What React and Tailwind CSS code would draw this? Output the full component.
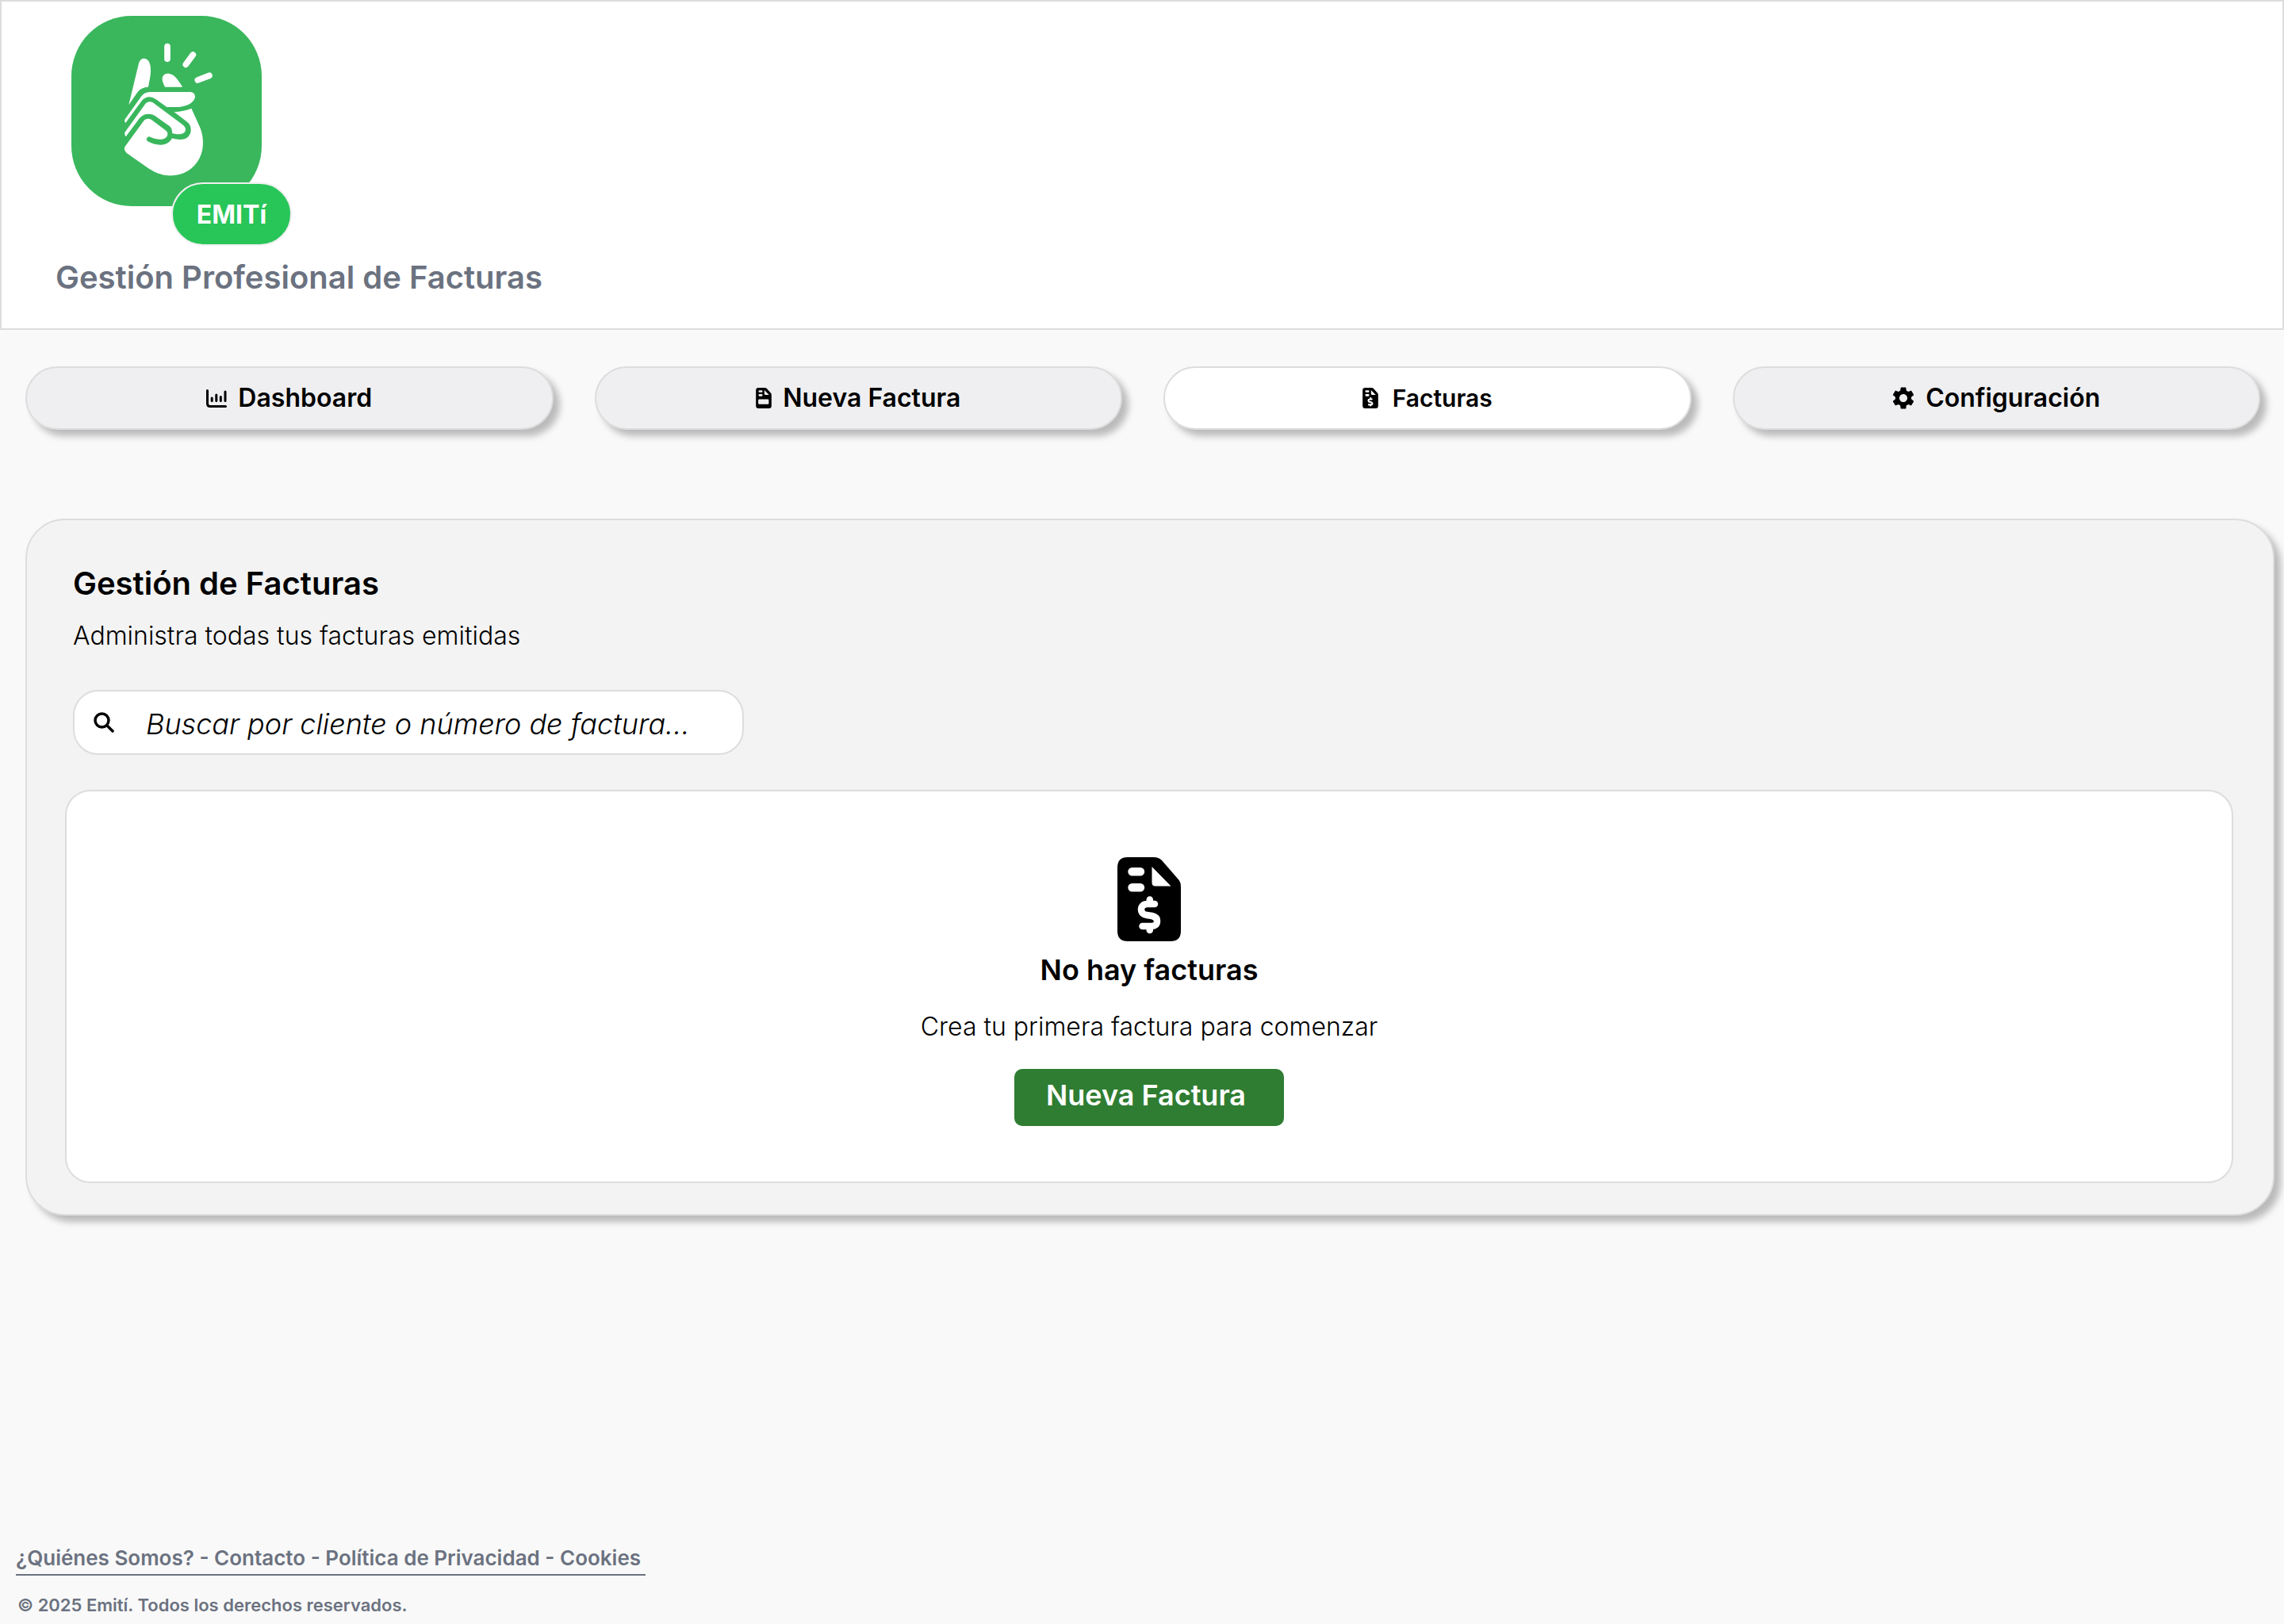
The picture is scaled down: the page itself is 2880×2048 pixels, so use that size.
import { MdSettings } from "react-icons/md";

function SnapLogo() {
  return (
    <svg viewBox="-150 -30 720 720" className="size-60" role="img" aria-label="Emití">
      <rect x="-150" y="-30" width="720" height="720" rx="228" fill="#3ab75d" />
      <g stroke="#fff" strokeWidth="23" strokeLinecap="round">
        <path d="M213 86V133" />
        <path d="M310 117L283 154" />
        <path d="M372 196L328 213" />
      </g>
      <g fill="#fff">
        <path d="M67 307L105 149C109 136 116 131 126 131C143 133 151 150 150 182C149 202 144 220 141 239C122 240 110 247 101 258Z" />
        <path d="M204 239C198 224 193 216 194 206C196 191 209 187 222 189C244 194 258 219 270 239Z" />
        <path d="M52 362L113 277Q126 258 147 258H300C313 259 318 267 318 278C312 302 280 315 245 315H211L170 286C150 272 132 274 117 290L55 375Q49 370 52 362Z" />
        <path d="M52 411L126 308C138 292 150 292 164 302L270 381C280 389 285 398 281 406C276 419 255 421 231 414C232 402 229 395 222 388L166 348C147 337 124 339 108 357L56 427Q50 421 52 411Z" />
        <path d="M53 464L123 368C131 358 144 357 154 364L205 402C213 408 216 415 213 422C208 439 180 442 150 429A9 9 0 0 0 139 445C165 460 200 464 219 448Q227 441 231 433C255 440 278 440 291 428C306 413 306 388 290 373L239 334Q276 331 304 320L337 393C352 430 352 475 334 510C310 556 262 580 206 573C180 569 160 559 136 543L59 489Q46 478 53 464Z" />
      </g>
    </svg>
  );
}

function ChartIcon() {
  return (
    <svg viewBox="0 0 26 23" className="h-[23px] w-[26px] shrink-0" fill="none" stroke="currentColor" strokeWidth="3" strokeLinecap="round" aria-hidden="true">
      <path d="M1.5 1.5V18Q1.5 21.500 5 21.500H24.500M7.200 11V14.500M12.800 7V14.500M18.300 9.500V14.500M24 3V14.500" />
    </svg>
  );
}

function SheetBody() {
  return (
    <path
      fill="currentColor"
      fillRule="evenodd"
      d="M13 0H46Q52 0 56 4L76 27Q80 31 80 37V93Q80 106 67 106H13Q0 106 0 93V13Q0 0 13 0ZM18.500 13a5.200 5.200 0 0 0 0 10.400H29a5.200 5.200 0 0 0 0-10.400ZM18.500 33a5.200 5.200 0 0 0 0 10.400H29a5.200 5.200 0 0 0 0-10.400ZM43.500 12V32Q43.500 36.500 48 36.500H67.500Z"
    />
  );
}

function InvoiceMoneyIcon({ className }) {
  return (
    <svg viewBox="0 0 80 106" className={className} aria-hidden="true">
      <SheetBody />
      <path
        className="stroke-white"
        fill="none"
        strokeWidth="8.500"
        strokeLinecap="round"
        strokeLinejoin="round"
        d="M47 59H38C32.500 59 30 62 30 66C30 70 33 72.500 37 73L43.500 74C48 75 50 77 50 80.500C50 85 47.500 87 43 87H31.500M40.800 53.500V58M40.800 88V92"
      />
    </svg>
  );
}

function InvoiceIcon() {
  return (
    <svg viewBox="0 0 80 106" className="h-[26px] w-5 shrink-0" aria-hidden="true">
      <SheetBody />
      <rect x="12" y="59" width="54" height="26" rx="5" className="fill-[#efeff1]" />
    </svg>
  );
}

function SearchIcon() {
  return (
    <svg viewBox="0 0 26 26" className="size-[26px] shrink-0" fill="none" stroke="currentColor" strokeWidth="3.500" strokeLinecap="round" aria-hidden="true">
      <circle cx="10.500" cy="10.500" r="8.500" />
      <path d="M17 17L24 24" />
    </svg>
  );
}

const tabs = [
  { label: "Dashboard", icon: <ChartIcon /> },
  { label: "Nueva Factura", icon: <InvoiceIcon /> },
  { label: "Facturas", icon: <InvoiceMoneyIcon className="h-[26px] w-5 shrink-0" />, active: true },
  {
    label: "Configuración",
    icon: <MdSettings viewBox="2 2 20 20" className="size-7 shrink-0" aria-hidden="true" />,
  },
];

const links = ["¿Quiénes Somos?", "Contacto", "Política de Privacidad", "Cookies"];

export default function App() {
  return (
    <div className="flex min-h-screen flex-col bg-[#f9f9f9] font-['Inter',sans-serif] text-black">
      <header className="border-2 border-[#dddddd] bg-white pb-10 pl-[68px] pt-[18px]">
        <div className="relative ml-5 w-60">
          <SnapLogo />
          <span className="absolute left-[126px] top-[210px] flex h-20 w-[152px] items-center justify-center rounded-full border-2 border-[#f0f0f0] bg-[#28c559] pt-[2px] text-[32px] font-bold text-white">
            EMITí
          </span>
        </div>
        <p className="mt-[66px] text-[40px] font-semibold leading-[48px] text-[#6b7280]">
          Gestión Profesional de Facturas
        </p>
      </header>

      <nav className="mt-[46px] grid grid-cols-4 gap-[52px] pl-8 pr-[30px]">
        {tabs.map((tab) => (
          <button
            key={tab.label}
            type="button"
            aria-current={tab.active ? "page" : undefined}
            className={`flex h-20 items-center justify-center rounded-full border-2 border-[#dddddd] font-semibold shadow-[8px_8px_8px_rgba(0,0,0,0.25)] ${
              tab.active ? "gap-[18px] bg-white text-[30px]" : "gap-[14px] bg-[#efeff1] text-[32px]"
            }`}
          >
            {tab.icon}
            {tab.label}
          </button>
        ))}
      </nav>

      <main className="ml-8 mr-3 mt-28 rounded-[50px] border-2 border-[#dddddd] bg-[#f3f3f3] pb-[39px] pl-12 pr-[50px] pt-[54px] shadow-[8px_8px_8px_rgba(0,0,0,0.25)]">
        <div className="ml-[10px]">
          <h1 className="text-[40px] font-semibold leading-[52px]">Gestión de Facturas</h1>
          <p className="mt-5 text-[32px] font-light leading-10">Administra todas tus facturas emitidas</p>
          <label className="mt-12 flex h-[82px] max-w-[846px] items-center gap-10 rounded-[32px] border-2 border-[#dddddd] bg-white px-6">
            <SearchIcon />
            <input
              type="text"
              aria-label="Buscar facturas"
              placeholder="Buscar por cliente o número de factura..."
              className="w-full bg-transparent pt-1 text-[36px] font-light italic outline-none placeholder:text-black placeholder:opacity-100"
            />
          </label>
        </div>

        <section className="mt-11 flex flex-col items-center rounded-[32px] border-2 border-[#dddddd] bg-white pb-[70px] pt-[83px]">
          <InvoiceMoneyIcon className="h-[106px] w-20" />
          <h2 className="mt-3 text-[36px] font-semibold leading-[48px]">No hay facturas</h2>
          <p className="mt-7 text-[32px] font-light leading-10">Crea tu primera factura para comenzar</p>
          <button
            type="button"
            className="mt-[33px] h-[72px] w-[340px] rounded-[10px] bg-[#2f7d32] pb-[6px] pr-2 text-[36px] font-semibold text-white"
          >
            Nueva Factura
          </button>
        </section>
      </main>

      <footer className="mt-auto flex flex-col items-start pb-[9px] pl-5 font-semibold text-[#6b7280]">
        <nav aria-label="Pie de página" className="border-b-2 border-[#6b7280] pb-[2px] pr-[6px] text-[26px] leading-9">
          {links.map((link, i) => (
            <span key={link}>
              {i > 0 && " - "}
              <a href="#">{link}</a>
            </span>
          ))}
        </nav>
        <p className="ml-[2px] mt-[22px] text-[22px] leading-[30px]">© 2025 Emití. Todos los derechos reservados.</p>
      </footer>
    </div>
  );
}
